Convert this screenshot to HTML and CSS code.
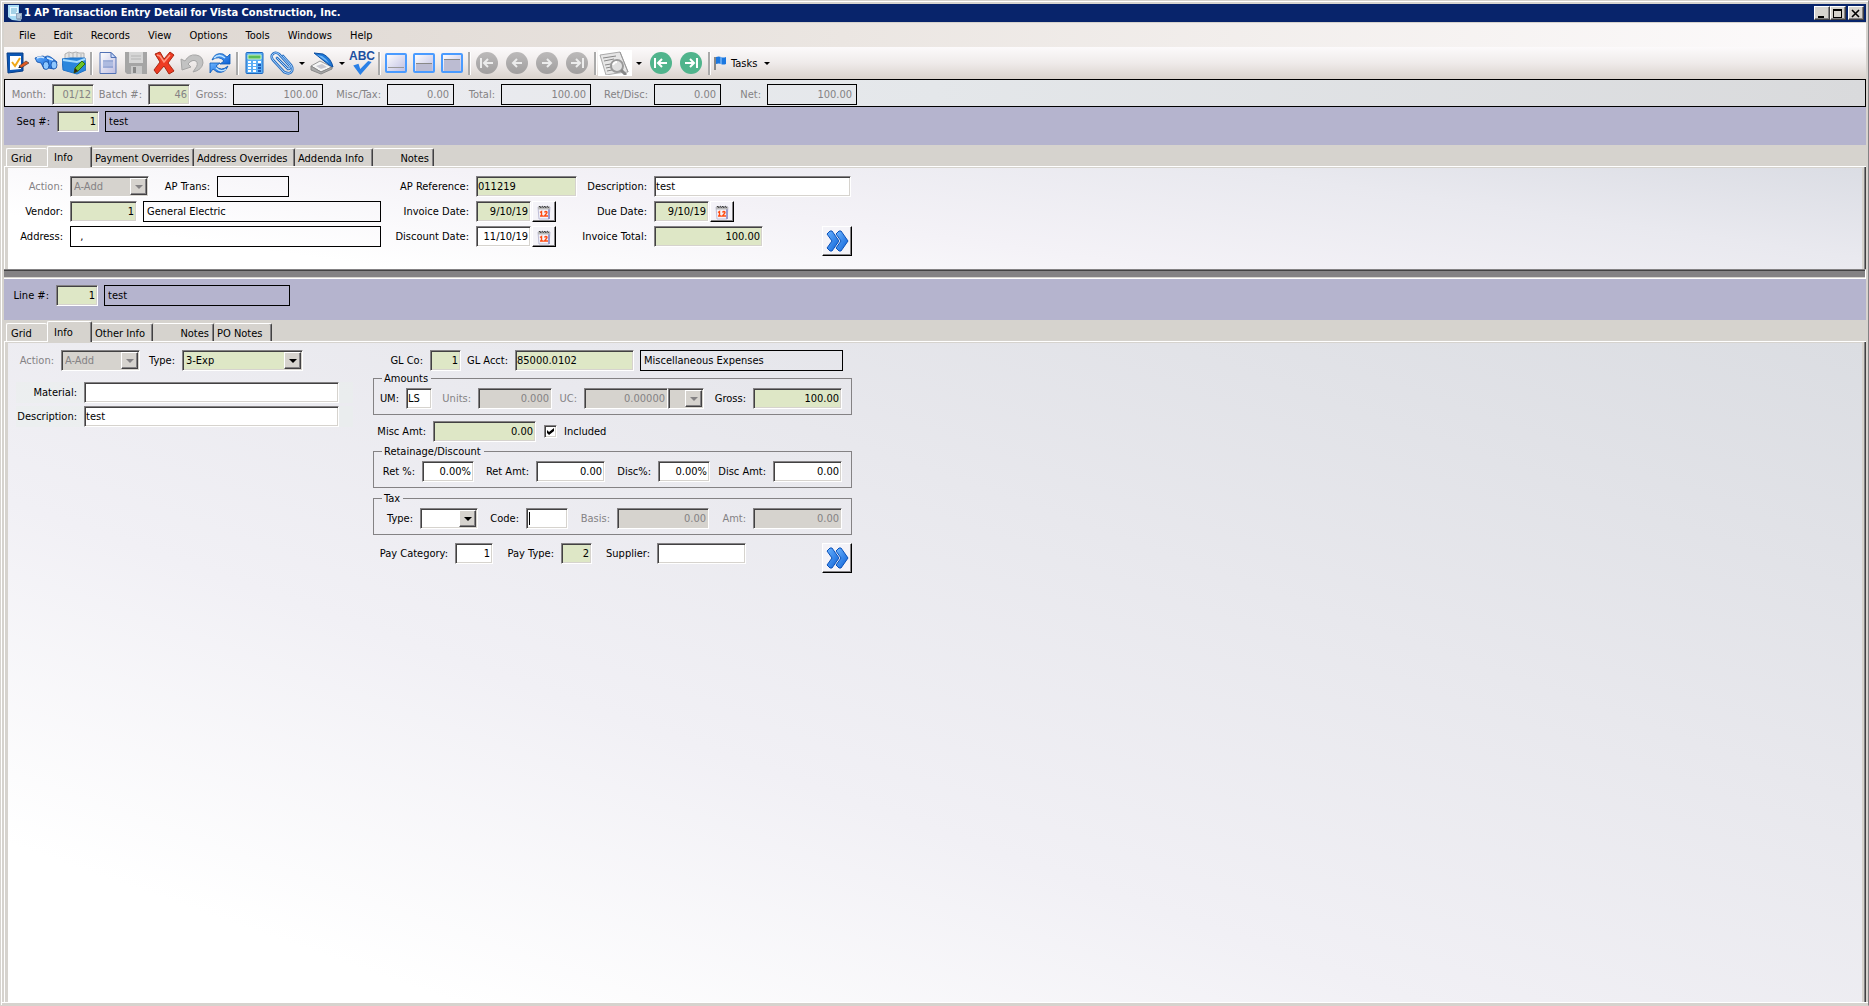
FILE: index.html
```html
<!DOCTYPE html>
<html lang="en">
<head>
<meta charset="utf-8">
<title>1 AP Transaction Entry Detail for Vista Construction, Inc.</title>
<link rel="stylesheet" href="styles.css">
</head>
<body>
<svg width="0" height="0" class="defs" aria-hidden="true">
  <defs>
    <linearGradient id="blue" x1="0" y1="0" x2="1" y2="1"><stop offset="0" stop-color="#6cb4ff"/><stop offset="1" stop-color="#0a5fd6"/></linearGradient>
    <linearGradient id="pane" x1="0" y1="0" x2="1" y2="1"><stop offset="0" stop-color="#fff"/><stop offset="1" stop-color="#bcbce0"/></linearGradient>
    <linearGradient id="grey" x1="0" y1="0" x2="0" y2="1"><stop offset="0" stop-color="#bcbaba"/><stop offset="1" stop-color="#a09e9e"/></linearGradient>
    <symbol id="chevrons" viewBox="0 0 24 24"><g stroke="#0a50b8" stroke-width="1" fill="url(#blue)"><path d="M2 5 5 2h2l7 10-7 10H5l-3-3 5-7z"/><path d="M11 5l3-3h2l7 10-7 10h-2l-3-3 5-7z"/></g></symbol>
    <symbol id="calendar" viewBox="0 0 16 16"><path d="M2 3h12l-1 12H3z" fill="#f4f4fb" stroke="#bdbdd6"/><path d="M12 4h2v11h-2z" fill="#9999cc"/><path d="M2 4h12" stroke="#b9b9b9" stroke-width="3"/><path d="M3 3q1-2 2 1M5.500 3q1-2 2 1M8 3q1-2 2 1M10.500 3q1-2 2 1" fill="none" stroke="#333"/><path d="M4 8.500 5.500 7.500V12M4 12h3.500M8.500 8.500Q9 7.500 10 7.500q2 .500 0 2.500l-1.500 2H12" fill="none" stroke="#ff4b12" stroke-width="1.400"/></symbol>
  </defs>
</svg>
<main class="window">
  <header class="titlebar">
    <svg class="app-icon" viewBox="0 0 16 16"><path d="M1 0h11v11l2 5-9-1L1 12z" fill="#a9dcf5"/><path d="M3 2h8v9H3z" fill="#e9f8ff"/><path d="M4 4h6M4 6h6M4 8h5" stroke="#62add0"/><path d="M9 8h6v6l-3 2-3-2z" fill="#8fa6be"/><path d="M10 10h4M10 12h3" stroke="#dceaf5"/></svg>
    <h1 class="title">1 AP Transaction Entry Detail for Vista Construction, Inc.</h1>
    <div class="window-buttons">
      <button class="win-btn" aria-label="Minimize"><svg viewBox="0 0 12 10"><path d="M2 7h6v2H2z"/></svg></button>
      <button class="win-btn" aria-label="Maximize"><svg viewBox="0 0 12 10"><path d="M1 0h9v9H1zM2 2v6h7V2z" fill-rule="evenodd"/></svg></button>
      <button class="win-btn close" aria-label="Close"><svg viewBox="0 0 12 10"><path d="M2 1l7 7M9 1 2 8" stroke="#000" stroke-width="1.600"/></svg></button>
    </div>
  </header>
  <nav class="menubar">
    <button>File</button><button>Edit</button><button>Records</button><button>View</button><button>Options</button><button>Tools</button><button>Windows</button><button>Help</button>
  </nav>
  <div class="toolbar" role="toolbar" aria-label="Main">
    <div class="tools">
      <button aria-label="Edit form"><svg viewBox="0 0 24 24"><path d="M1 2h16v18l-15 2z" fill="#0c57b5" stroke="#073d86"/><path d="M4 5h11v13l-11 1z" fill="#fff"/><path d="M6 11l3 4 5-8" fill="none" stroke="#f0a818" stroke-width="2"/><path d="M13 15l7-5 3 2-8 5z" fill="#e05a22" stroke="#333" stroke-width=".600"/><path d="M12 17l2-2 1 2z" fill="#223"/></svg></button>
      <button aria-label="Find"><svg viewBox="0 0 24 24"><g stroke="#0b4aa6" stroke-width=".800"><path d="M10 7q3-4 8 0l5 4-3 7-6-1-4-5z" fill="url(#blue)"/><path d="M1 7l3-1 5-1 5 3 1 8-5 2-3-6-4-1z" fill="url(#blue)"/><ellipse cx="12" cy="14.500" rx="3" ry="4" fill="#8fc8ff"/><ellipse cx="20" cy="14" rx="3" ry="4" fill="#8fc8ff"/></g><path d="M3 7q4-2 7 0M13 7l6 2" fill="none" stroke="#d6ebff" stroke-width="1.400"/></svg></button>
      <button aria-label="Open file box"><svg viewBox="0 0 24 24"><path d="M3 9V3l4-2 3 1 4-1 3 1h5v8z" fill="#e4e4e4" stroke="#b0b0b0"/><path d="M7 2v4M11 2v5M15 2v4M19 3v4" stroke="#b5b5b5"/><path d="M0 8l8-1h15l1 12-9 4-14-4z" fill="#2a86dc" stroke="#1f70c4"/><path d="M1 9l14 2 8-3" fill="none" stroke="#a7dcff" stroke-width="2"/><path d="M12 22l1-5 7-7 3 3-7 7z" fill="#6cc327" stroke="#32690f"/><path d="M12 22l1-5 3 3z" fill="#332210"/></svg></button>
    </div>
    <div class="tools">
      <button aria-label="New"><svg viewBox="0 0 24 24"><path d="M4 1.500h11l5 5v16H4z" fill="url(#pane)" stroke="#5272b5"/><path d="M15 1.500v5h5z" fill="#c9dcff" stroke="#5272b5"/><path d="M7 10h10M7 16h10" stroke="#5f7fc0"/><path d="M7 11h10v4H7z" fill="#aebbe0"/></svg></button>
      <button aria-label="Save" disabled><svg viewBox="0 0 24 24"><path d="M1 1h22v22H3l-2-2z" fill="#a5a5a5"/><path d="M5 1h14v11H5z" fill="#d6d6d6"/><path d="M7 5h10M7 8h10" stroke="#b4b4b4"/><path d="M7 15h11v8H7z" fill="#c9c9c9"/><path d="M9 16h3v6H9z" fill="#888"/></svg></button>
      <button aria-label="Delete"><svg viewBox="0 0 24 24"><path d="M3 3l5-2 4 7 6-7 4 3-6 8 6 8-5 3-5-8-7 8-3-4 6-8z" fill="#ee3b23" stroke="#a82812"/><path d="M5 4l3 1 4 6 6-7" fill="none" stroke="#ff9781" stroke-width="1.500"/></svg></button>
      <button aria-label="Undo" disabled><svg viewBox="0 0 24 24"><path d="M1 8l1 11 9-3-3-3q4-5 8-3 3 3-1 8l-2 3q9-2 10-9 0-7-7-8Q9 3 5 10z" fill="#c2c2c2" stroke="#a5a5a5"/></svg></button>
      <button aria-label="Refresh"><svg viewBox="0 0 24 24"><g fill="url(#blue)" stroke="#0a58b5" stroke-width=".800"><path d="M4 9Q7 1 15 3l4 3 3-3v10H12l4-3q-5-6-12-1z"/><path d="M20 15q-3 8-11 6l-4-3-3 4V12h10l-4 3q5 6 12 0z"/></g><path d="M6 7q5-5 11 0M18 18q-5 4-10-1" fill="none" stroke="#bfe5ff" stroke-width="1.500"/></svg></button>
    </div>
    <div class="tools">
      <button aria-label="Calculator"><svg viewBox="0 0 24 24"><rect x="4" y="1.500" width="17" height="21" rx="1" fill="#5badf5" stroke="#1c68c0"/><path d="M6 4h13v4H6z" fill="#58bd58" stroke="#c9f4c2"/><g stroke="#fff" stroke-width="2"><path d="M6 11h3M11 11h3M16 11h3M6 14h3M11 14h3M6 17h3M11 17h3M6 20h3M11 20h3"/></g><path d="M16 14h3M16 17h3M16 20h3" stroke="#1d5bb8" stroke-width="2"/></svg></button>
      <button aria-label="Attachments"><svg viewBox="0 0 24 24"><g fill="none" stroke-linecap="round"><path d="M7 7l11 11q3 0 2-3L9 3Q5 0 2 4q-1 3 1 5l11 12q6 3 8-1 1-3-1-6l-8-9" stroke="#2a6fc0" stroke-width="2.600"/><path d="M7 7l11 11q3 0 2-3L9 3Q5 0 2 4q-1 3 1 5l11 12q6 3 8-1 1-3-1-6l-8-9" stroke="#a5d2ff" stroke-width="1"/></g></svg></button>
      <button class="drop" aria-label="Attachment options"></button>
      <button aria-label="Scan"><svg viewBox="0 0 24 24"><path d="M1 15l9-5 12 6-11 5z" fill="#f5f5f5" stroke="#999"/><path d="M1 15v4l10 4 11-5v-2l-11 5z" fill="#aaa" stroke="#888"/><path d="M6 15l6-2 5 3-6 2z" fill="#c8c8d0"/><path d="M4 2l9 1q8 4 10 13l-4-2z" fill="#1e78d8" stroke="#0b4ea0"/><path d="M7 4l5 1q5 3 7 7z" fill="#71b7f5"/></svg></button>
      <button class="drop" aria-label="Scan options"></button>
      <button class="spell" aria-label="Spelling"><span>ABC</span><svg viewBox="0 0 24 16"><path d="M2 5l6-2 2 6L19 0l4 1-13 15z" fill="#2a80e6"/></svg></button>
    </div>
    <div class="tools">
      <button aria-label="Pane bottom"><svg viewBox="0 0 24 24"><rect x="2" y="3" width="20" height="18" rx="1" fill="url(#pane)" stroke="#4a9bff" stroke-width="2"/><path d="M4 16.500h16" stroke="#999"/></svg></button>
      <button aria-label="Pane middle"><svg viewBox="0 0 24 24"><rect x="2" y="3" width="20" height="18" rx="1" fill="url(#pane)" stroke="#4a9bff" stroke-width="2"/><path d="M4 13h16v7H4z" fill="#bcbcd2"/><path d="M4 12.500h16" stroke="#888"/></svg></button>
      <button aria-label="Pane top"><svg viewBox="0 0 24 24"><rect x="2" y="3" width="20" height="18" rx="1" fill="url(#pane)" stroke="#4a9bff" stroke-width="2"/><path d="M4 9h16v11H4z" fill="#bcbcd2"/><path d="M4 8.500h16" stroke="#888"/></svg></button>
    </div>
    <div class="tools round">
      <button aria-label="First record" disabled><svg viewBox="0 0 24 24"><circle cx="12" cy="12" r="11" fill="url(#grey)"/><path d="M6 7v10M18 12H9M13 8l-4 4 4 4" fill="none" stroke="#ececec" stroke-width="2"/></svg></button>
      <button aria-label="Previous record" disabled><svg viewBox="0 0 24 24"><circle cx="12" cy="12" r="11" fill="url(#grey)"/><path d="M17 12H8M12 8l-4 4 4 4" fill="none" stroke="#ececec" stroke-width="2"/></svg></button>
      <button aria-label="Next record" disabled><svg viewBox="0 0 24 24"><circle cx="12" cy="12" r="11" fill="url(#grey)"/><path d="M7 12h9M12 8l4 4-4 4" fill="none" stroke="#ececec" stroke-width="2"/></svg></button>
      <button aria-label="Last record" disabled><svg viewBox="0 0 24 24"><circle cx="12" cy="12" r="11" fill="url(#grey)"/><path d="M18 7v10M6 12h9M11 8l4 4-4 4" fill="none" stroke="#ececec" stroke-width="2"/></svg></button>
    </div>
    <div class="tools">
      <button class="preview" aria-label="Preview report"><svg viewBox="0 0 32 24"><path d="M1 4l20-3 8 20-10 1-12 2z" fill="#e6e6e6" stroke="#aaa"/><path d="M4 7l13-2M5 10l10-2M6 14l6-1M7 17l5-1M8 20l5-1" stroke="#888"/><path d="M21 1l8 20" stroke="#999"/><circle cx="18" cy="15" r="6" fill="#e0e0e0" stroke="#9a9a9a" stroke-width="2"/><path d="M22 19l5 5" stroke="#888" stroke-width="3"/><path d="M14 14q1-3 4-3" fill="none" stroke="#fff" stroke-width="2"/></svg></button>
      <button class="drop wide" aria-label="Preview options"></button>
      <div class="tools round">
        <button aria-label="Go to first"><svg viewBox="0 0 24 24"><circle cx="12" cy="12" r="11" fill="#50b48c"/><path d="M6 7v10M18 12H9M13 8l-4 4 4 4" fill="none" stroke="#fff" stroke-width="2"/></svg></button>
        <button aria-label="Go to last"><svg viewBox="0 0 24 24"><circle cx="12" cy="12" r="11" fill="#50b48c"/><path d="M18 7v10M6 12h9M11 8l4 4-4 4" fill="none" stroke="#fff" stroke-width="2"/></svg></button>
      </div>
    </div>
    <div class="tools">
      <button class="tasks"><svg viewBox="0 0 16 16"><path d="M2 2h2v13H2z" fill="#888"/><path d="M4 2q3-1 5 0t5 0v7q-3 1-5 0T4 9z" fill="#1c78e0"/><path d="M9 2v7" stroke="#9ccfff"/></svg>Tasks<span class="arrow"></span></button>
    </div>
  </div>

  <section class="batch fields">
    <label class="dim" for="month">Month:</label><input id="month" class="req dim num" value="01/12">
    <label class="dim" for="batch">Batch #:</label><input id="batch" class="req dim num" value="46">
    <label class="dim" for="gross">Gross:</label><input id="gross" class="box dim num" readonly value="100.00">
    <label class="dim" for="misctax">Misc/Tax:</label><input id="misctax" class="box dim num" readonly value="0.00">
    <label class="dim" for="total">Total:</label><input id="total" class="box dim num" readonly value="100.00">
    <label class="dim" for="retdisc">Ret/Disc:</label><input id="retdisc" class="box dim num" readonly value="0.00">
    <label class="dim" for="net">Net:</label><input id="net" class="box dim num" readonly value="100.00">
  </section>

  <section class="key-row seq fields">
    <label for="seq">Seq #:</label><input id="seq" class="req num" value="1"><input class="box second" aria-label="Sequence description" readonly value="test">
  </section>
  <div class="tabs header-tabs" role="tablist">
    <button role="tab">Grid</button><button role="tab" class="active" aria-selected="true">Info</button><button role="tab">Payment Overrides</button><button role="tab">Address Overrides</button><button role="tab">Addenda Info</button><button role="tab" class="end">Notes</button>
  </div>
  <section class="page header-page">
    <div class="stack">
      <div class="fields r-action">
        <label class="dim" for="action">Action:</label><span class="combo off"><select id="action" disabled><option>A-Add</option></select></span>
        <label for="aptrans">AP Trans:</label><input id="aptrans" class="box" readonly>
      </div>
      <div class="fields r-vendor">
        <label for="vendor">Vendor:</label><input id="vendor" class="req num" value="1"><input class="box second" aria-label="Vendor name" readonly value="General Electric">
      </div>
      <div class="fields r-address"><label for="address">Address:</label><input id="address" class="box" readonly value="  ,"></div>
    </div>
    <div class="stack">
      <div class="fields r-ref"><label for="apref">AP Reference:</label><input id="apref" class="req" value="011219"></div>
      <div class="fields r-date"><label for="invdate">Invoice Date:</label><input id="invdate" class="req num" value="9/10/19"><button class="cal" aria-label="Pick invoice date"><svg><use href="#calendar"/></svg></button></div>
      <div class="fields r-date"><label for="discdate">Discount Date:</label><input id="discdate" class="num" value="11/10/19"><button class="cal" aria-label="Pick discount date"><svg><use href="#calendar"/></svg></button></div>
    </div>
    <div class="stack">
      <div class="fields r-desc"><label for="desc">Description:</label><input id="desc" value="test"></div>
      <div class="fields r-due"><label for="due">Due Date:</label><input id="due" class="req num" value="9/10/19"><button class="cal" aria-label="Pick due date"><svg><use href="#calendar"/></svg></button></div>
      <div class="fields r-total"><label for="invtotal">Invoice Total:</label><input id="invtotal" class="req num" value="100.00"><button class="next" aria-label="More header fields"><svg><use href="#chevrons"/></svg></button></div>
    </div>
  </section>
  <div class="splitter" role="separator"></div>

  <section class="key-row line fields">
    <label for="line">Line #:</label><input id="line" class="req num" value="1"><input class="box second" aria-label="Line description" readonly value="test">
  </section>
  <div class="tabs line-tabs" role="tablist">
    <button role="tab">Grid</button><button role="tab" class="active" aria-selected="true">Info</button><button role="tab">Other Info</button><button role="tab" class="end">Notes</button><button role="tab">PO Notes</button>
  </div>
  <section class="page line-page">
    <div class="left">
      <div class="fields r-type">
        <label class="dim" for="laction">Action:</label><span class="combo off"><select id="laction" disabled><option>A-Add</option></select></span>
        <label for="ltype">Type:</label><span class="combo req"><select id="ltype"><option>3-Exp</option></select></span>
      </div>
      <div class="texts">
        <div class="fields r-text"><label for="material">Material:</label><input id="material"></div>
        <div class="fields r-text"><label for="ldesc">Description:</label><input id="ldesc" value="test"></div>
      </div>
    </div>
    <div class="right">
      <div class="fields r-gl">
        <label for="glco">GL Co:</label><input id="glco" class="req num" value="1">
        <label for="glacct">GL Acct:</label><input id="glacct" class="req" value="85000.0102"><input class="box second" aria-label="Account name" readonly value="Miscellaneous Expenses">
      </div>
      <fieldset>
        <legend>Amounts</legend>
        <div class="fields r-amounts">
          <label for="um">UM:</label><input id="um" value="LS">
          <label class="dim" for="units">Units:</label><input id="units" class="num" disabled value="0.000">
          <label class="dim" for="uc">UC:</label><input id="uc" class="num" disabled value="0.00000"><span class="combo off"><select aria-label="Unit cost per" disabled><option></option></select></span>
          <label for="lgross">Gross:</label><input id="lgross" class="req num" value="100.00">
        </div>
      </fieldset>
      <div class="fields r-misc">
        <label for="misc">Misc Amt:</label><input id="misc" class="req num" value="0.00">
        <input type="checkbox" id="included" checked><label class="after" for="included">Included</label>
      </div>
      <fieldset>
        <legend>Retainage/Discount</legend>
        <div class="fields r-ret">
          <label for="retpct">Ret %:</label><input id="retpct" class="num" value="0.00%">
          <label for="retamt">Ret Amt:</label><input id="retamt" class="num" value="0.00">
          <label for="discpct">Disc%:</label><input id="discpct" class="num" value="0.00%">
          <label for="discamt">Disc Amt:</label><input id="discamt" class="num" value="0.00">
        </div>
      </fieldset>
      <fieldset>
        <legend>Tax</legend>
        <div class="fields r-tax">
          <label for="taxtype">Type:</label><span class="combo"><select id="taxtype"><option></option></select></span>
          <label for="code">Code:</label><span class="caret"><input id="code"></span>
          <label class="dim" for="basis">Basis:</label><input id="basis" class="num" disabled value="0.00">
          <label class="dim" for="amt">Amt:</label><input id="amt" class="num" disabled value="0.00">
        </div>
      </fieldset>
      <div class="fields r-pay">
        <label for="paycat">Pay Category:</label><input id="paycat" class="num" value="1">
        <label for="paytype">Pay Type:</label><input id="paytype" class="req num" value="2">
        <label for="supplier">Supplier:</label><input id="supplier">
        <button class="next" aria-label="More line fields"><svg><use href="#chevrons"/></svg></button>
      </div>
    </div>
  </section>
</main>
</body>
</html>
```
FILE: styles.css
```css
* { box-sizing: border-box; }

body {
  margin: 0;
  background: #d6d3ce;
  font: 11px/13px "DejaVu Sans Condensed", "Noto Sans", sans-serif;
  color: #000;
}
button, input, select { font: inherit; color: inherit; margin: 0; }
button { padding: 0; border: 0; background: none; }
.defs { position: absolute; }

.window {
  display: flex;
  flex-direction: column;
  min-height: 100vh;
  padding: 3px 2px 3px 3px;
  border: 1px solid #d6d3ce;
  border-right-color: #848284;
  box-shadow: inset 1px 1px #fff, inset 0 -2px #d6d3ce, inset 0 -3px #fff;
}

/* Title bar */
.titlebar {
  display: flex;
  align-items: center;
  height: 18px;
  padding: 0 2px 0 3px;
  background: #08246b;
  color: #fff;
}
.app-icon { width: 16px; height: 16px; }
.title {
  flex: 1;
  margin: 0 0 0 1px;
  font: bold 11px/14px "DejaVu Sans Condensed", sans-serif;
}
.window-buttons { display: flex; }
.win-btn {
  width: 16px;
  height: 14px;
  background: #d6d3ce;
  border: 1px solid;
  border-color: #fff #424142 #424142 #fff;
  box-shadow: inset -1px -1px #848284;
}
.win-btn svg { display: block; width: 12px; height: 10px; margin: 1px 0 0 1px; }
.close { margin-left: 2px; }

/* Menu and toolbar */
.menubar {
  display: flex;
  gap: 18px;
  height: 25px;
  padding-left: 15px;
  background: linear-gradient(to right, #dcd5cf, #ebe6e2 45%, #fdfbfc);
  border-top: 1px solid #d6d3ce;
}
.toolbar {
  display: flex;
  align-items: center;
  height: 32px;
  background: linear-gradient(#fcfafb, #efebea 50%, #dad3cd);
}
.tools { display: flex; align-items: center; }
.tools + .tools::before {
  content: "";
  width: 2px;
  height: 23px;
  margin: 0 1px 0 2px;
  background: #aaa;
  border-right: 1px solid #fff;
}
.tools button {
  display: flex;
  justify-content: center;
  align-items: center;
  width: 28px;
  height: 26px;
}
.tools svg { width: 24px; height: 24px; }
.round button { width: 30px; }
.tools .tools.round::before { display: none; }
.tools .preview { width: 34px; background: #fff; }
.preview svg { width: 32px; }
.tools .drop { width: 12px; }
.drop::after, .arrow {
  content: "";
  border: 3px solid transparent;
  border-top-color: #000;
  border-bottom: 0;
}
.tools .wide { width: 14px; }
.tools .spell { flex-direction: column; font: bold 12px/10px "Liberation Sans", sans-serif; color: #1c4fa0; }
.tools .spell svg { width: 24px; height: 14px; }
.tools .tasks { width: auto; gap: 3px; }
.tasks svg { width: 16px; height: 16px; }
.tasks .arrow { margin-left: 4px; }

/* Labels and inputs; each row names its own column widths */
.fields { display: grid; align-items: start; }
.fields label {
  padding: 4px 7px 0 0;
  text-align: right;
  white-space: nowrap;
}
.fields .after { padding-left: 7px; }
.dim { color: #848284; }
.fields input:not([type]), .combo {
  width: 100%;
  min-width: 0;
  height: 21px;
  padding: 0 2px 1px 1px;
  background: #fff;
  border: 1px solid;
  border-color: #848284 #fff #fff #848284;
  border-radius: 0;
  box-shadow: inset 1px 1px #424142, inset -1px -1px #d6d3ce;
}
.fields .num { text-align: right; }
.fields input.req, .combo.req { background: #dee7c6; }
.fields input:disabled, .combo.off { background: #d6d3ce; color: #848284; }
.fields input.box {
  padding: 0 4px 0 3px;
  background: transparent;
  border: 1px solid #000;
  box-shadow: none;
}
.fields input.second:not([type]) { width: auto; margin-left: 6px; justify-self: stretch; }

.combo { position: relative; display: block; }
.combo select {
  appearance: none;
  width: 100%;
  height: 18px;
  padding: 0 2px;
  border: 0;
  background: none;
  opacity: 1;
}
.combo::before {
  content: "";
  position: absolute;
  top: 1px;
  right: 1px;
  bottom: 1px;
  width: 15px;
  background: #d6d3ce;
  border: 1px solid;
  border-color: #fff #424142 #424142 #fff;
  box-shadow: inset -1px -1px #848284;
}
.combo::after {
  content: "";
  position: absolute;
  top: 8px;
  right: 5px;
  border: 4px solid transparent;
  border-top-color: #000;
  border-bottom: 0;
}
.combo.off::after { border-top-color: #848284; }

/* Batch strip and key rows */
.batch {
  grid-template-columns: 47px 42px 54px 42px 43px 90px 64px 67px 47px 90px 63px 67px 46px 90px;
  height: 28px;
  padding-top: 4px;
  border: 1px solid #000;
  background: linear-gradient(to right, #efeef3, #e4e7ea 50%, #d9dadc);
}
.batch label { padding-right: 6px; }
.key-row { background: #b5b4ce; align-content: start; }
.seq { grid-template-columns: 53px 42px 200px; height: 38px; padding-top: 4px; }
.line { grid-template-columns: 52px 42px 192px; height: 41px; padding-top: 6px; }

/* Tabs */
.tabs {
  display: grid;
  height: 22px;
  padding: 3px 0 0 2px;
  border-bottom: 1px solid #fff;
}
.header-tabs { grid-template-columns: 41px 45px 102px 101px 78px 61px; }
.line-tabs { grid-template-columns: 41px 45px 61px 61px 58px; }
.tabs button {
  padding: 2px 4px 0;
  text-align: left;
  white-space: nowrap;
  border: 1px solid;
  border-color: #fff #424142 transparent #fff;
  border-bottom: 0;
  border-radius: 2px 2px 0 0;
  box-shadow: inset -1px 0 #848284;
}
.tabs button:nth-child(n + 3) { padding-left: 2px; border-left-color: transparent; }
.tabs button:first-child { border-right: 0; box-shadow: none; }
.tabs .active { margin: -2px 0 -1px; padding: 1px 4px 0 6px; background: #d6d3ce; }
.tabs .end { text-align: right; }

/* Tab pages */
.page {
  display: flex;
  align-items: flex-start;
  border: solid #d6d3ce;
  border-width: 1px 4px 0;
  border-image: linear-gradient(to right, #fff 1px, #d6d3ce 1px, #d6d3ce calc(100% - 2px), #848284 calc(100% - 2px), #848284 calc(100% - 1px), #424142 calc(100% - 1px)) 1 4 0 4;
}
.header-page {
  padding: 8px 0 13px;
  background: linear-gradient(8deg, #fff 15%, #f4f2f7 45%, #e9e9ef 75%, #dbdde4) padding-box;
}
.stack { display: grid; gap: 4px; }
.r-action { grid-template-columns: 62px 79px 68px 72px; }
.r-vendor { grid-template-columns: 62px 67px 244px; }
.r-address { grid-template-columns: 62px 311px; }
.r-ref { grid-template-columns: 95px 101px; }
.r-date { grid-template-columns: 95px 55px 25px; }
.r-desc { grid-template-columns: 77px 197px; }
.r-due { grid-template-columns: 77px 55px 25px; }
.r-total { grid-template-columns: 77px 109px 59px 30px; }
.r-total .next { grid-column: 4; }

.cal, .next {
  display: grid;
  place-items: center;
  background: #f4f3f8;
  border: 1px solid;
  border-color: #fff #000 #000 #fff;
  box-shadow: inset -1px -1px #848284;
}
.cal { width: 24px; height: 21px; margin-left: 1px; }
.cal svg { width: 16px; height: 16px; }
.next { width: 30px; height: 30px; }
.next svg { width: 24px; height: 24px; }

.splitter {
  height: 10px;
  background: #848284;
  border: solid;
  border-width: 1px 1px 1px 0;
  border-color: #848284 #fff #fff;
  box-shadow: inset 0 1px #424142, inset 0 -1px #d6d3ce;
}

.line-page {
  flex: 1;
  padding-top: 7px;
  background: linear-gradient(to top right, #fff 12%, #f1f0f5 38%, #e8e8ed 65%, #dbdde2) padding-box;
}
.left { display: grid; gap: 11px; width: 365px; }
.texts { display: grid; gap: 3px; margin-left: 8px; width: 337px; }
.r-type { grid-template-columns: 53px 79px 42px 121px; }
.r-text { grid-template-columns: 68px 255px; background: rgba(232, 240, 236, .4); }
.r-gl { grid-template-columns: 57px 31px 54px 119px 209px; }
.r-amounts { grid-template-columns: 31px 26px 46px 74px 32px 84px 36px 49px 89px; }
.r-misc { grid-template-columns: 60px 103px 21px auto; justify-content: start; margin: 6px 0 3px; }
.r-ret { grid-template-columns: 47px 52px 62px 69px 53px 52px 63px 69px; }
.r-tax { grid-template-columns: 45px 58px 48px 42px 49px 92px 44px 89px; }
.r-pay { grid-template-columns: 82px 38px 68px 31px 65px 89px 76px 30px; margin-top: 8px; }
.r-pay .next { grid-column: 8; }

fieldset {
  width: 479px;
  margin: 0 0 4px;
  padding: 3px 0 5px 1px;
  border: 1px solid #848284;
}
legend { margin-left: 7px; padding: 0 3px 0 2px; }
.r-gl { margin-bottom: 1px; }

input[type="checkbox"] {
  appearance: none;
  display: grid;
  place-items: center;
  width: 13px;
  height: 13px;
  margin: 4px 0 0 8px;
  background: #fff;
  border: 1px solid;
  border-color: #848284 #fff #fff #848284;
  box-shadow: inset 1px 1px #424142, inset -1px -1px #d6d3ce;
}
input[type="checkbox"]:checked::after {
  content: "";
  width: 7px;
  height: 7px;
  background: #000;
  clip-path: polygon(0 29%, 0 71%, 29% 100%, 100% 42%, 100% 0, 29% 58%);
}

/* Insertion point in the field being edited */
.caret { position: relative; }
.caret::after {
  content: "";
  position: absolute;
  left: 3px;
  top: 4px;
  width: 1px;
  height: 13px;
  background: #000;
}
```
